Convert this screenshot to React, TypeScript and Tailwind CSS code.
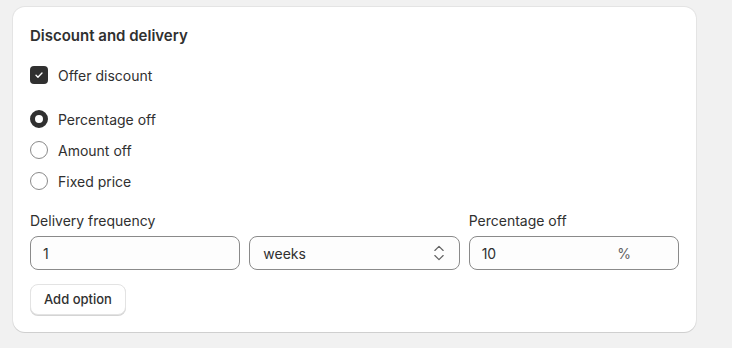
import { ChevronsUpDown } from 'lucide-react';

function Radio({ checked, label }: { checked?: boolean; label: string }) {
  return (
    <label className="flex h-5 items-center gap-[10px]">
      {checked ? (
        <span className="h-[18px] w-[18px] rounded-full border-[5px] border-[#303030] bg-white" />
      ) : (
        <span className="h-[18px] w-[18px] rounded-full border border-[#8a8a8a] bg-white" />
      )}
      <span>{label}</span>
    </label>
  );
}

export default function App() {
  return (
    <div
      className="h-[348px] w-[732px] bg-[#f1f1f1] pt-[7px] pl-[13px] text-[14px] text-[#303030]"
      style={{ fontFamily: 'Inter, "Noto Sans", sans-serif' }}
    >
      <div className="w-[683px] rounded-xl bg-white px-[17px] pt-[19px] pb-[17px] shadow-[0_1px_0_0_rgba(26,26,26,0.1),0_0_0_1px_rgba(26,26,26,0.06)]">
        <h2 className="text-[15px] leading-5 font-semibold">Discount and delivery</h2>

        <label className="mt-[19px] flex h-5 items-center gap-[10px]">
          <span className="flex h-[18px] w-[18px] items-center justify-center rounded-[4px] bg-[#303030]">
            <svg viewBox="0 0 16 16" className="h-3 w-3" fill="none">
              <path d="M4 8.3l2.6 2.6L12 5.4" stroke="white" strokeWidth="1.8" strokeLinecap="round" strokeLinejoin="round" />
            </svg>
          </span>
          <span>Offer discount</span>
        </label>

        <div className="mt-6 flex flex-col gap-[11px]">
          <Radio checked label="Percentage off" />
          <Radio label="Amount off" />
          <Radio label="Fixed price" />
        </div>

        <div className="mt-5 grid grid-cols-3 gap-[9px]">
          <div>
            <div className="mb-[5px] leading-5">Delivery frequency</div>
            <div className="flex h-[34px] items-center rounded-lg border border-[#8a8a8a] bg-[#fdfdfd] px-3">1</div>
          </div>
          <div>
            <div className="mb-[5px] leading-5">&nbsp;</div>
            <div className="flex h-[34px] items-center justify-between rounded-lg border border-[#8a8a8a] bg-[#fdfdfd] pr-[10px] pl-[13px]">
              <span>weeks</span>
              <ChevronsUpDown className="h-5 w-5 text-[#616161]" strokeWidth={1.4} />
            </div>
          </div>
          <div>
            <div className="mb-[5px] leading-5">Percentage off</div>
            <div className="flex h-[34px] items-center justify-between rounded-lg border border-[#8a8a8a] bg-[#fdfdfd] pr-[47px] pl-3">
              <span>10</span>
              <span className="text-[#616161]">%</span>
            </div>
          </div>
        </div>

        <button className="mt-[14px] flex h-[31px] items-center rounded-lg border border-[#e3e3e3] bg-white px-[13px] text-[13px] font-medium text-[#303030] shadow-[0_1px_0_0_#d4d4d4]">
          Add option
        </button>
      </div>
    </div>
  );
}
